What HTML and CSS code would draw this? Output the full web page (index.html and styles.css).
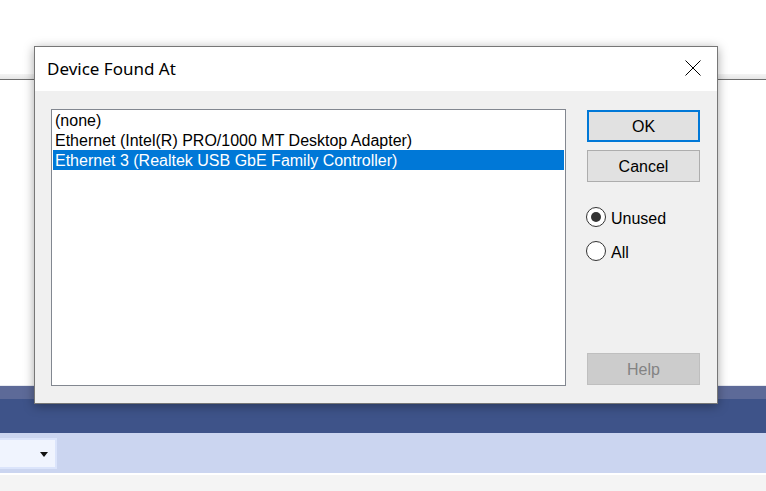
FILE: index.html
```html
<!DOCTYPE html>
<html lang="en">
<head>
    <meta charset="UTF-8">
    <meta name="viewport" content="width=device-width, initial-scale=1.0">
    <title>Device Found At</title>
    <link rel="stylesheet" href="styles.css">
</head>
<body>
    <div class="app">
        <div class="app-top"></div>
        <div class="app-rule"></div>
        <div class="app-workspace"></div>
        <div class="app-band"></div>
        <div class="app-toolbar">
            <div class="combo"><span class="combo-arrow"></span></div>
        </div>
        <div class="app-status"></div>
    </div>

    <div class="dialog">
        <div class="dialog-title">
            <span class="dialog-caption">Device Found At</span>
            <svg class="close-icon" width="16" height="16" viewBox="0 0 16 16">
                <path d="M0.5 0.5 L15.5 15.5 M15.5 0.5 L0.5 15.5" stroke="#000" stroke-width="1" fill="none"/>
            </svg>
        </div>
        <div class="dialog-body">
            <div class="listbox">
                <div class="list-item">(none)</div>
                <div class="list-item">Ethernet (Intel(R) PRO/1000 MT Desktop Adapter)</div>
                <div class="list-item selected">Ethernet 3 (Realtek USB GbE Family Controller)</div>
            </div>
            <div class="side">
                <button class="btn btn-default">OK</button>
                <button class="btn">Cancel</button>
                <div class="radio-group">
                    <label class="radio"><span class="radio-circle checked"></span><span class="radio-text">Unused</span></label>
                    <label class="radio"><span class="radio-circle"></span><span class="radio-text">All</span></label>
                </div>
                <button class="btn btn-disabled">Help</button>
            </div>
        </div>
    </div>
</body>
</html>
```

FILE: styles.css
```css
body {
    margin: 0;
    font-family: 'Liberation Sans', Arial, sans-serif;
    background-color: #ffffff;
    overflow: hidden;
}

.app {
    width: 766px;
    height: 491px;
    display: flex;
    flex-direction: column;
}

.app-top {
    height: 74px;
    background-color: #ffffff;
}

.app-rule {
    height: 5px;
    background: linear-gradient(#f4f4f4, #e6e6e6);
    border-bottom: 1px solid #6e6e6e;
}

.app-workspace {
    height: 305px;
    background-color: #ffffff;
    border-bottom: 1px solid #e8eaf0;
}

.app-band {
    height: 34px;
    background-color: #3e5389;
    border-top: 13px solid #5d6a98;
}

.app-toolbar {
    height: 40px;
    background-color: #cbd5f0;
    padding-top: 5px;
    box-sizing: border-box;
}

.combo {
    width: 57px;
    height: 31px;
    box-sizing: border-box;
    background-color: #f0f4fe;
    border: 2px solid #dbe4fb;
    border-left: none;
    position: relative;
}

.combo-arrow {
    position: absolute;
    right: 7px;
    top: 12px;
    border-left: 4px solid transparent;
    border-right: 4px solid transparent;
    border-top: 5px solid #111;
}

.app-status {
    flex: 1;
    background-color: #f4f4f4;
    border-top: 2px solid #ffffff;
}

.dialog {
    position: absolute;
    left: 34px;
    top: 46px;
    width: 684px;
    height: 358px;
    box-sizing: border-box;
    border: 1px solid #777777;
    background-color: #f0f0f0;
    box-shadow: 0 2px 10px rgba(0, 0, 0, 0.35);
    display: flex;
    flex-direction: column;
}

.dialog-title {
    height: 44px;
    background-color: #ffffff;
    display: flex;
    align-items: center;
    padding: 0 16px 0 12px;
}

.dialog-caption {
    flex: 1;
    font-family: 'Noto Sans', 'Open Sans', sans-serif;
    font-size: 17px;
    color: #000;
    padding-bottom: 2px;
}

.close-icon {
    display: block;
    margin-top: -3px;
}

.dialog-body {
    flex: 1;
    display: flex;
    padding: 18px 16px 17px 16px;
}

.listbox {
    flex: 0 0 515px;
    box-sizing: border-box;
    background-color: #ffffff;
    border: 1px solid #828790;
    font-size: 16px;
    color: #000;
}

.list-item {
    height: 19px;
    padding-top: 1px;
    line-height: 20px;
    padding-left: 2px;
    margin: 0 1px;
    white-space: nowrap;
}

.list-item.selected {
    background-color: #0078d7;
    color: #ffffff;
}

.side {
    width: 113px;
    margin-left: 21px;
    padding: 1px 0;
    display: flex;
    flex-direction: column;
}

.btn {
    height: 32px;
    box-sizing: border-box;
    background-color: #e1e1e1;
    border: 1px solid #adadad;
    font-family: 'Liberation Sans', Arial, sans-serif;
    font-size: 16px;
    color: #000;
    padding: 1px 0 0 0;
    margin-bottom: 8px;
}

.btn-default {
    border: 2px solid #0078d7;
}

.btn-disabled {
    margin-top: auto;
    margin-bottom: 0;
    background-color: #cccccc;
    border-color: #bfbfbf;
    color: #838383;
}

.radio-group {
    margin-top: 17px;
    display: flex;
    flex-direction: column;
    gap: 14px;
}

.radio {
    display: flex;
    align-items: center;
    font-size: 16px;
    color: #000;
    height: 20px;
}

.radio-text {
    padding-top: 3px;
}

.radio-circle {
    width: 20px;
    height: 20px;
    box-sizing: border-box;
    border: 1px solid #333333;
    border-radius: 50%;
    background-color: #ffffff;
    margin-left: -1px;
    margin-right: 5px;
    display: flex;
    align-items: center;
    justify-content: center;
}

.radio-circle.checked::after {
    content: '';
    width: 10px;
    height: 10px;
    border-radius: 50%;
    background-color: #333333;
}
```
